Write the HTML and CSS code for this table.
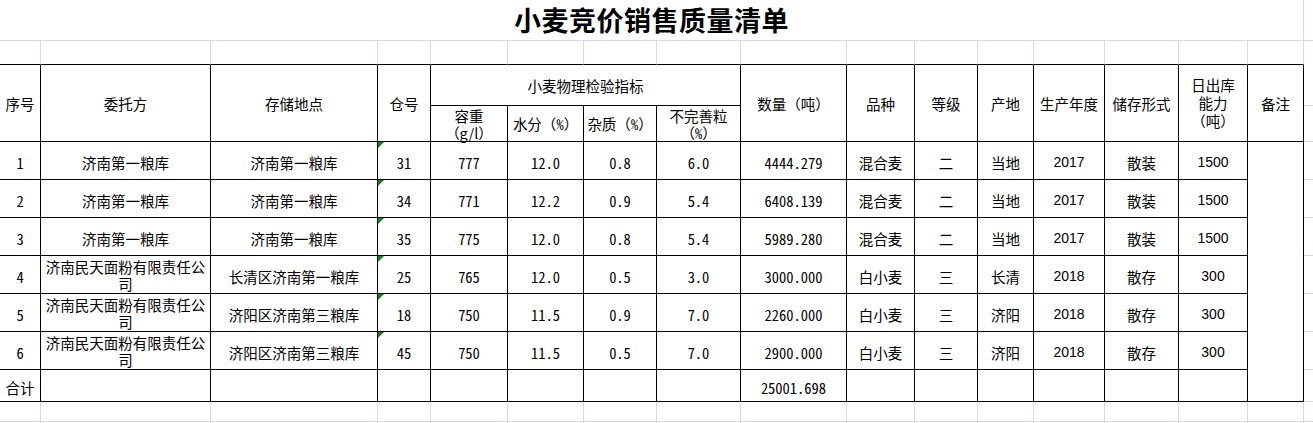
FILE: index.html
```html
<!DOCTYPE html>
<html lang="zh-CN">
<head>
<meta charset="utf-8">
<title>小麦竞价销售质量清单</title>
<link rel="stylesheet" href="styles.css">
</head>
<body>
<table class="sheet">
  <colgroup>
    <col class="w41"><col class="w170"><col class="w167"><col class="w53">
    <col class="w77"><col class="w76"><col class="w73"><col class="w84">
    <col class="w106"><col class="w68"><col class="w63"><col class="w56">
    <col class="w71"><col class="w74"><col class="w69"><col class="w56">
    <col class="w10">
  </colgroup>
  <tr class="h-title">
    <td colspan="16" class="g title">小麦竞价销售质量清单</td>
    <td class="x"></td>
  </tr>
  <tr class="h-blank">
    <td class="gt"></td><td class="gt"></td><td class="gt"></td><td class="gt"></td>
    <td class="gt"></td><td class="gt"></td><td class="gt"></td><td class="gt"></td>
    <td class="gt"></td><td class="gt"></td><td class="gt"></td><td class="gt"></td>
    <td class="gt"></td><td class="gt"></td><td class="gt"></td><td class="gt"></td>
    <td class="xn"></td>
  </tr>
  <tr class="h-headA">
    <td rowspan="2" class="t">序号</td>
    <td rowspan="2" class="t">委托方</td>
    <td rowspan="2" class="t">存储地点</td>
    <td rowspan="2" class="t">仓号</td>
    <td colspan="4" class="t">小麦物理检验指标</td>
    <td rowspan="2" class="t">数量（吨）</td>
    <td rowspan="2" class="t">品种</td>
    <td rowspan="2" class="t">等级</td>
    <td rowspan="2" class="t">产地</td>
    <td rowspan="2" class="t">生产年度</td>
    <td rowspan="2" class="t">储存形式</td>
    <td rowspan="2" class="t tall">日出库<br>能力<br>（吨）</td>
    <td rowspan="2" class="t">备注</td>
    <td class="x"></td>
  </tr>
  <tr class="h-headB">
    <td class="t">容重<br>（g/l）</td>
    <td class="t">水分（<span class="n">%</span>）</td>
    <td class="t">杂质（<span class="n">%</span>）</td>
    <td class="t">不完善粒<br>（<span class="n">%</span>）</td>
    <td class="x"></td>
  </tr>
  <tr class="h-row">
    <td class="t n">1</td>
    <td class="t">济南第一粮库</td>
    <td class="t">济南第一粮库</td>
    <td class="t n mark">31</td>
    <td class="t n">777</td><td class="t n">12.0</td><td class="t n">0.8</td><td class="t n">6.0</td>
    <td class="t n">4444.279</td>
    <td class="t">混合麦</td><td class="t">二</td><td class="t">当地</td>
    <td class="t a">2017</td><td class="t">散装</td><td class="t a">1500</td>
    <td rowspan="7" class="t"></td>
    <td class="x"></td>
  </tr>
  <tr class="h-row">
    <td class="t n">2</td>
    <td class="t">济南第一粮库</td>
    <td class="t">济南第一粮库</td>
    <td class="t n mark">34</td>
    <td class="t n">771</td><td class="t n">12.2</td><td class="t n">0.9</td><td class="t n">5.4</td>
    <td class="t n">6408.139</td>
    <td class="t">混合麦</td><td class="t">二</td><td class="t">当地</td>
    <td class="t a">2017</td><td class="t">散装</td><td class="t a">1500</td>
    <td class="x"></td>
  </tr>
  <tr class="h-row">
    <td class="t n">3</td>
    <td class="t">济南第一粮库</td>
    <td class="t">济南第一粮库</td>
    <td class="t n mark">35</td>
    <td class="t n">775</td><td class="t n">12.0</td><td class="t n">0.8</td><td class="t n">5.4</td>
    <td class="t n">5989.280</td>
    <td class="t">混合麦</td><td class="t">二</td><td class="t">当地</td>
    <td class="t a">2017</td><td class="t">散装</td><td class="t a">1500</td>
    <td class="x"></td>
  </tr>
  <tr class="h-row">
    <td class="t n">4</td>
    <td class="t wrap">济南民天面粉有限责任公司</td>
    <td class="t">长清区济南第一粮库</td>
    <td class="t n mark">25</td>
    <td class="t n">765</td><td class="t n">12.0</td><td class="t n">0.5</td><td class="t n">3.0</td>
    <td class="t n">3000.000</td>
    <td class="t">白小麦</td><td class="t">三</td><td class="t">长清</td>
    <td class="t a">2018</td><td class="t">散存</td><td class="t a">300</td>
    <td class="x"></td>
  </tr>
  <tr class="h-row">
    <td class="t n">5</td>
    <td class="t wrap">济南民天面粉有限责任公司</td>
    <td class="t">济阳区济南第三粮库</td>
    <td class="t n mark">18</td>
    <td class="t n">750</td><td class="t n">11.5</td><td class="t n">0.9</td><td class="t n">7.0</td>
    <td class="t n">2260.000</td>
    <td class="t">白小麦</td><td class="t">三</td><td class="t">济阳</td>
    <td class="t a">2018</td><td class="t">散存</td><td class="t a">300</td>
    <td class="x"></td>
  </tr>
  <tr class="h-row">
    <td class="t n">6</td>
    <td class="t wrap">济南民天面粉有限责任公司</td>
    <td class="t">济阳区济南第三粮库</td>
    <td class="t n mark">45</td>
    <td class="t n">750</td><td class="t n">11.5</td><td class="t n">0.5</td><td class="t n">7.0</td>
    <td class="t n">2900.000</td>
    <td class="t">白小麦</td><td class="t">三</td><td class="t">济阳</td>
    <td class="t a">2018</td><td class="t">散存</td><td class="t a">300</td>
    <td class="x"></td>
  </tr>
  <tr class="h-total">
    <td class="t">合计</td>
    <td class="t"></td><td class="t"></td><td class="t"></td>
    <td class="t"></td><td class="t"></td><td class="t"></td><td class="t"></td>
    <td class="t n">25001.698</td>
    <td class="t"></td><td class="t"></td><td class="t"></td>
    <td class="t"></td><td class="t"></td><td class="t"></td>
    <td class="x"></td>
  </tr>
  <tr class="h-empty">
    <td class="g"></td><td class="g"></td><td class="g"></td><td class="g"></td>
    <td class="g"></td><td class="g"></td><td class="g"></td><td class="g"></td>
    <td class="g"></td><td class="g"></td><td class="g"></td><td class="g"></td>
    <td class="g"></td><td class="g"></td><td class="g"></td><td class="g"></td>
    <td class="x"></td>
  </tr>
  <tr class="h-empty">
    <td class="g"></td><td class="g"></td><td class="g"></td><td class="g"></td>
    <td class="g"></td><td class="g"></td><td class="g"></td><td class="g"></td>
    <td class="g"></td><td class="g"></td><td class="g"></td><td class="g"></td>
    <td class="g"></td><td class="g"></td><td class="g"></td><td class="g"></td>
    <td class="x"></td>
  </tr>
</table>
</body>
</html>
```

FILE: styles.css
```css
html, body {
  margin: 0;
  padding: 0;
  background: #ffffff;
  overflow: hidden;
}

.sheet {
  table-layout: fixed;
  border-collapse: separate;
  border-spacing: 0;
  width: 1313px;
  font-family: "Noto Sans CJK SC", "Noto Sans", sans-serif;
  font-size: 14.5px;
  line-height: 17px;
  color: #000;
}

.w41 { width: 41px; }
.w170 { width: 170px; }
.w167 { width: 167px; }
.w53 { width: 53px; }
.w77 { width: 77px; }
.w76 { width: 76px; }
.w73 { width: 73px; }
.w84 { width: 84px; }
.w106 { width: 106px; }
.w68 { width: 68px; }
.w63 { width: 63px; }
.w56 { width: 56px; }
.w71 { width: 71px; }
.w74 { width: 74px; }
.w69 { width: 69px; }
.w10 { width: 10px; }

.h-title { height: 41px; }
.h-blank { height: 24px; }
.h-headA { height: 41px; }
.h-headB { height: 36px; }
.h-row { height: 38px; }
.h-total { height: 32px; }
.h-empty { height: 20px; }

.sheet td {
  padding: 0;
  text-align: center;
  vertical-align: middle;
  border: 0 solid transparent;
}

.h-row td.t,
.h-total td.t {
  padding-top: 3px;
}

.h-row td.wrap {
  padding-top: 0;
  line-height: 17px;
}

.h-headB td.t {
  line-height: 17px;
}

.sheet td.tall {
  line-height: 18px;
}

/* plain spreadsheet gridline cell */
.sheet td.g {
  border-right: 1px solid #d3d9e6;
  border-bottom: 1px solid #d3d9e6;
}

/* gridline cell sitting on top of the table's upper edge */
.sheet td.gt {
  border-right: 1px solid #d3d9e6;
  border-bottom: 1px solid #000;
}

/* bordered table cell */
.sheet td.t {
  border-right: 1px solid #000;
  border-bottom: 1px solid #000;
}

/* sliver of sheet to the right of the table */
.sheet td.x {
  border-bottom: 1px solid #d3d9e6;
}

.sheet td.xn {
  border-bottom: 0;
}

.sheet td.title {
  font-size: 27px;
  font-weight: bold;
  line-height: 30px;
  letter-spacing: 0.5px;
}

.n {
  font-feature-settings: "hwid" 1;
}

.sheet td.a {
  font-family: "Liberation Sans", Arial, sans-serif;
  font-size: 14px;
}

.sheet td.mark {
  position: relative;
}

.sheet td.mark::before {
  content: "";
  position: absolute;
  top: 0;
  left: 0;
  width: 0;
  height: 0;
  border-top: 6px solid #1b7d1b;
  border-right: 6px solid transparent;
}
```
